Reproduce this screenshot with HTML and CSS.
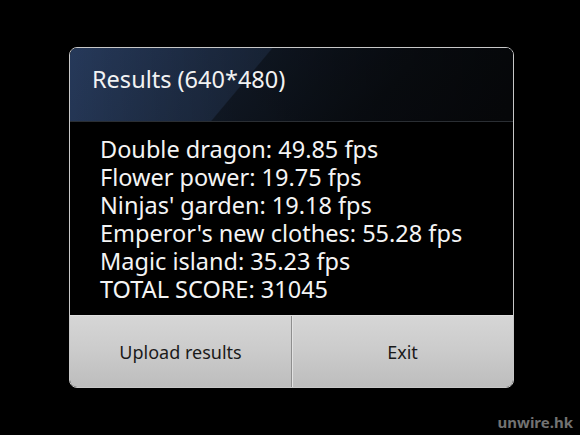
FILE: index.html
```html
<!DOCTYPE html>
<html lang="en">
<head>
    <meta charset="UTF-8">
    <meta name="viewport" content="width=device-width, initial-scale=1.0">
    <title>Results</title>
    <link rel="stylesheet" href="styles.css">
</head>
<body>
    <div class="dialog">
        <div class="title">Results (640*480)</div>
        <div class="content">
            <p>Double dragon: 49.85 fps</p>
            <p>Flower power: 19.75 fps</p>
            <p>Ninjas' garden: 19.18 fps</p>
            <p>Emperor's new clothes: 55.28 fps</p>
            <p>Magic island: 35.23 fps</p>
            <p>TOTAL SCORE: 31045</p>
        </div>
        <div class="buttons">
            <button class="btn">Upload results</button>
            <button class="btn">Exit</button>
        </div>
    </div>
    <div class="mark">unwire.hk</div>
</body>
</html>
```

FILE: styles.css
```css
html, body {
    height: 100%;
}
body {
    margin: 0;
    background-color: #000;
    font-family: "Noto Sans", "Open Sans", sans-serif;
    position: relative;
    overflow: hidden;
}
.dialog {
    margin: 47px 0 0 69px;
    width: 443px;
    border: 1px solid #c8c8c8;
    border-radius: 8px;
    overflow: hidden;
    background-color: #000;
}
.title {
    height: 74px;
    box-sizing: border-box;
    padding: 15px 0 0 22px;
    color: #f2f2f2;
    font-size: 23.5px;
    background:
        linear-gradient(90deg, rgba(0,0,0,0) 0%, rgba(0,0,0,0.35) 60%, rgba(0,0,0,0.5) 100%),
        linear-gradient(130deg, #26395a 0%, #1f2e46 40%, #131c2a 40.3%, #0d1219 70%, #0b0d11 100%);
    border-bottom: 1px solid #2a2e33;
}
.content {
    padding: 13px 0 12px 30px;
    color: #f4f4f4;
    font-size: 23.5px;
    line-height: 28px;
}
.content p {
    margin: 0;
    height: 28px;
}
.buttons {
    display: flex;
    height: 71px;
    border-top: 1px solid #e0e0e0;
}
.btn {
    flex: 1;
    border: none;
    margin: 0;
    font-family: inherit;
    font-size: 18px;
    color: #1a1a1a;
    background: linear-gradient(180deg, #d6d6d6 0%, #cbcbcb 50%, #bdbdbd 100%);
}
.btn + .btn {
    border-left: 1px solid #8e8e8e;
    box-shadow: inset 1px 0 0 #e2e2e2;
}
.mark {
    position: absolute;
    right: 7px;
    bottom: 3px;
    color: #727272;
    font-weight: bold;
    font-size: 15px;
}
```
